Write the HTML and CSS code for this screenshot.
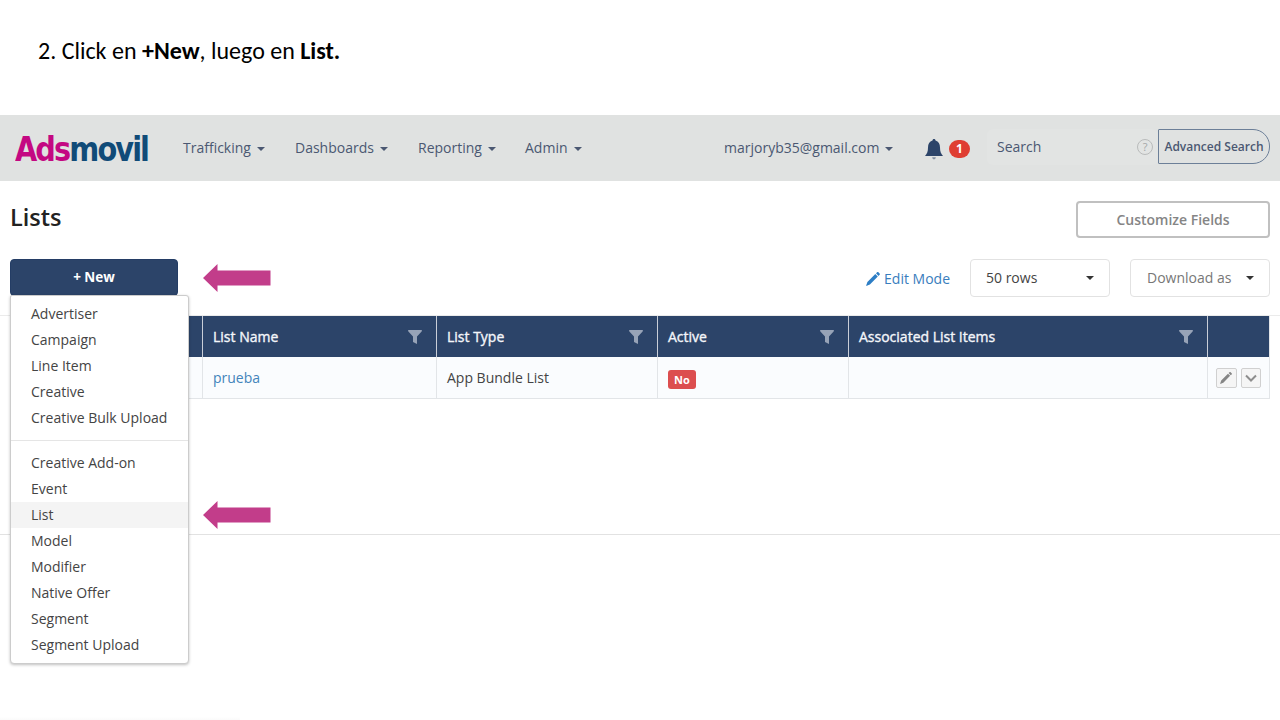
FILE: index.html
```html
<!DOCTYPE html>
<html lang="es">
<head>
<meta charset="utf-8">
<title>Lists</title>
<link rel="stylesheet" href="styles.css">
</head>
<body>
<svg class="defs" width="0" height="0">
  <symbol id="funnel" viewBox="0 0 14 14"><path d="M.3 0h13.4c.4.9.2 1.3-.3 1.8L9 6.6V14L5 12V6.6L.6 1.8C.1 1.3-.1.9.3 0z"/></symbol>
  <symbol id="pencil" viewBox="0 0 14 14"><path d="M0 14l1.400-4.100 7.900-7.900 2.500 2.500-7.900 7.900zM10 1.300L11.100.3c.4-.4.9-.4 1.300 0l1.200 1.200c.4.400.4.900 0 1.300l-1.100 1.100z"/></symbol>
</svg>
<p class="step">2. Click en <b>+New</b>, luego en <b>List.</b></p>
<header class="topbar">
  <div class="logo"><span class="logo-text"><span class="ads">Ads</span>movil</span></div>
  <nav class="nav">
    <a class="caret trafficking">Trafficking</a>
    <a class="caret dashboards">Dashboards</a>
    <a class="caret reporting">Reporting</a>
    <a class="caret">Admin</a>
  </nav>
  <a class="caret account">marjoryb35@gmail.com</a>
  <svg class="bell" width="18" height="21" viewBox="0 0 18 21"><path d="M9 0c1 0 1.500.7 1.500 1.600C13.600 2.400 15 5 15 8.500c0 4 1 6.200 3 8.500H0c2-2.300 3-4.500 3-8.500 0-3.500 1.400-6.100 4.500-6.900C7.500.7 8 0 9 0z"/><path d="M7.200 18.200h3.600C10.800 19.400 10 20.300 9 20.300s-1.800-.9-1.800-2.100z" opacity=".5"/></svg>
  <span class="count">1</span>
  <div class="search"><span>Search</span><span class="help">?</span></div>
  <button class="advanced">Advanced Search</button>
</header>
<main class="page">
  <div class="row heading">
    <h1>Lists</h1>
    <button class="customize">Customize Fields</button>
  </div>
  <div class="row toolbar">
    <div class="new-wrap">
      <button class="new">+ New</button>
      <div class="menu">
        <ul>
          <li>Advertiser</li><li>Campaign</li><li>Line Item</li><li>Creative</li><li>Creative Bulk Upload</li>
        </ul>
        <ul>
          <li>Creative Add-on</li><li>Event</li><li class="active">List</li><li>Model</li><li>Modifier</li><li>Native Offer</li><li>Segment</li><li>Segment Upload</li>
        </ul>
      </div>
      <svg class="arrow arrow-new" width="68" height="28" viewBox="0 0 68 28"><path d="M0 14L14.500 0v6.500H67.500v15H14.500V28z"/></svg>
      <svg class="arrow arrow-list" width="68" height="28" viewBox="0 0 68 28"><path d="M0 14L14.500 0v6.500H67.500v15H14.500V28z"/></svg>
    </div>
    <div class="tools">
      <a class="edit"><svg width="14" height="14"><use href="#pencil"/></svg><span>Edit Mode</span></a>
      <div class="select caret rows">50 rows</div>
      <div class="select caret download">Download as</div>
    </div>
  </div>
  <section class="results">
    <div class="grid">
      <div class="th"></div>
      <div class="th">List Name<svg width="14" height="14"><use href="#funnel"/></svg></div>
      <div class="th">List Type<svg width="14" height="14"><use href="#funnel"/></svg></div>
      <div class="th">Active<svg width="14" height="14"><use href="#funnel"/></svg></div>
      <div class="th">Associated List Items<svg width="14" height="14"><use href="#funnel"/></svg></div>
      <div class="th"></div>
      <div class="td"></div>
      <div class="td link">prueba</div>
      <div class="td">App Bundle List</div>
      <div class="td"><span class="no">No</span></div>
      <div class="td"></div>
      <div class="td actions">
        <span class="act"><svg width="12" height="12"><use href="#pencil"/></svg></span>
        <span class="act down"><svg width="12" height="8" viewBox="0 0 12 8"><path d="M1 1.500l5 5 5-5" fill="none" stroke="#8d8d8d" stroke-width="2"/></svg></span>
      </div>
    </div>
  </section>
</main>
<footer class="edge"></footer>
</body>
</html>
```

FILE: styles.css
```css
* { box-sizing: border-box; }
body { margin: 0; width: 1280px; height: 720px; overflow: hidden; background: #fff; font: 14px/20px "Open Sans", sans-serif; color: #444; display: flex; flex-direction: column; }
button { font-family: inherit; padding: 0; }
.defs { position: absolute; }
.step { margin: 0; height: 115px; padding: 36px 0 0 38px; font: 24px/30px Carlito, Lato, sans-serif; color: #000; white-space: nowrap; }
.topbar { height: 66px; flex: none; background: #e0e2e1; color: #4b5872; display: flex; align-items: center; }
.logo { width: 168px; padding-left: 15px; flex: none; }
.logo-text { display: inline-block; font: 700 34px/46px "DejaVu Sans Condensed", "DejaVu Sans", sans-serif; font-stretch: condensed; letter-spacing: -2px; color: #104b78; transform: scaleX(.94); transform-origin: left; padding-top: 1px; }
.ads { color: #c40882; }
.nav { display: flex; width: 556px; flex: none; padding-left: 15px; }
.trafficking { width: 112px; }
.dashboards { width: 123px; }
.reporting { width: 107px; }
.caret::after { content: ""; display: inline-block; border: 4px solid transparent; border-top-color: currentColor; border-bottom: 0; margin-left: 6px; vertical-align: 2px; }
.account { width: 201px; flex: none; white-space: nowrap; }
.bell { fill: #2c4469; flex: none; margin-top: 2px; }
.count { width: 21px; height: 18px; margin: 2px 0 0 6px; border-radius: 9px; background: #df3e32; color: #fff; font-size: 12px; line-height: 18px; font-weight: 700; text-align: center; flex: none; }
.search { width: 171px; height: 36px; margin: -2px 0 0 17px; padding: 0 5px 0 10px; border-radius: 6px; background: #e2e4e3; display: flex; align-items: center; justify-content: space-between; flex: none; }
.help { width: 16px; height: 16px; margin-top: -1px; border: 1.500px solid #b9bbbb; border-radius: 50%; font-size: 11px; line-height: 14px; text-align: center; color: #a4a7a8; }
.advanced { width: 112px; height: 35px; margin-top: -4px; border: 1.500px solid #6c7f98; border-radius: 1px 17px 17px 1px; background: none; color: #4b5872; font-size: 12px; font-weight: 600; white-space: nowrap; flex: none; }
.page { padding-top: 20px; }
.row { display: flex; justify-content: space-between; padding: 0 10px; }
.heading { height: 58px; }
h1 { margin: 0; font-size: 23.500px; line-height: 32px; font-weight: 600; color: #222; }
.customize { width: 194px; height: 37px; border: 2px solid #c0c0c0; border-radius: 4px; background: #fff; color: #858585; font-size: 14px; font-weight: 600; }
.toolbar { height: 57px; }
.new-wrap { position: relative; width: 168px; }
.new { width: 168px; height: 37px; padding-bottom: 2px; border: 1px solid #243d65; border-radius: 4px; background: #2c4469; color: #fff; font-size: 13.500px; font-weight: 700; display: block; }
.menu { position: absolute; z-index: 2; left: 0; top: 36px; width: 179px; height: 369px; padding-top: 5px; border: 1px solid #ccc; border-radius: 2px 3px 4px 4px; background: #fff; box-shadow: 0 1px 3px rgba(0,0,0,.25); }
.menu ul { list-style: none; margin: 0; padding: 0; }
.menu ul + ul { margin-top: 9px; padding-top: 9px; border-top: 1px solid #e5e5e5; }
.menu li { height: 26px; line-height: 26px; padding-left: 20px; white-space: nowrap; }
.menu .active { background: #f4f4f4; }
.arrow { position: absolute; left: 193px; fill: #c23d8a; }
.arrow-new { top: 5px; }
.arrow-list { top: 242px; z-index: 2; }
.tools { display: flex; gap: 20px; }
.edit { display: flex; align-items: center; gap: 4px; height: 39px; color: #397dbd; fill: #2d7ec5; }
.edit span { padding-top: 1px; }
.select { width: 140px; height: 38px; border: 1.500px solid #e2e2e2; border-radius: 4px; display: flex; align-items: center; justify-content: space-between; padding: 0 15px; background: #fff; }
.select::after { color: #333; }
.download { color: #777; padding-left: 16px; }
.results { height: 220px; margin-top: -1px; border-top: 1px solid #ebebeb; border-bottom: 1px solid #e2e2e2; padding-left: 10px; }
.grid { width: 1260px; display: grid; grid-template-columns: 192px 234px 221px 191px 359px 61px; grid-template-rows: 41px 41px; border: solid #e2e5e8; border-width: 0 1px 1px; }
.th { background: #2c4469; color: #f4f6fa; -webkit-text-stroke: .35px; display: flex; align-items: center; justify-content: space-between; padding: 0 14px 0 10px; border-right: 1px solid #c9ced8; fill: #97a3b7; white-space: nowrap; }
.td { background: #fafcfe; border-right: 1px solid #e2e5e8; padding: 0 10px; display: flex; align-items: center; }
.th:nth-child(6), .td:last-child { border-right: 0; }
.link { color: #4384bb; }
.no { width: 28px; height: 19px; border-radius: 3px; background: #dc4e4f; color: #fff; font-size: 11px; line-height: 19px; font-weight: 700; text-align: center; margin-top: 3px; }
.actions { padding: 0 8px; gap: 4px; }
.act { width: 21px; height: 20px; border: 1px solid #d0d0d0; border-radius: 2px; background: #f5f5f5; fill: #858585; display: flex; align-items: center; justify-content: center; }
.down { margin-top: 1px; }
.edge { width: 240px; height: 3px; margin-top: auto; background: linear-gradient(#fff, #fafafa); }
```
